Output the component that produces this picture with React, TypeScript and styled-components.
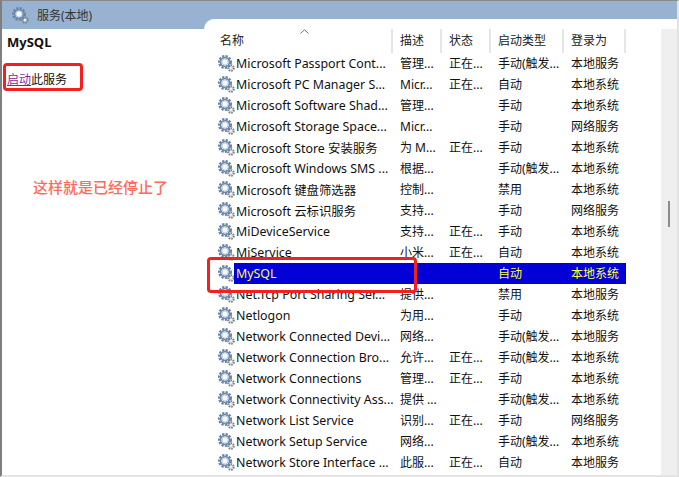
import styled, { createGlobalStyle } from "styled-components";

const GlobalStyle = createGlobalStyle`
  html, body {
    margin: 0;
    padding: 0;
    background: #fff;
  }
  body {
    font-family: "Noto Sans", "Noto Sans CJK SC", sans-serif;
    font-size: 12px;
    color: #111;
  }
`;

type Service = {
  name: string;
  desc: string;
  status: string;
  start: string;
  logon: string;
};

const services: Service[] = [
  { name: "Microsoft Passport Cont...", desc: "管理...", status: "正在...", start: "手动(触发...", logon: "本地服务" },
  { name: "Microsoft PC Manager S...", desc: "Micr...", status: "正在...", start: "自动", logon: "本地系统" },
  { name: "Microsoft Software Shad...", desc: "管理...", status: "", start: "手动", logon: "本地系统" },
  { name: "Microsoft Storage Space...", desc: "Micr...", status: "", start: "手动", logon: "网络服务" },
  { name: "Microsoft Store 安装服务", desc: "为 M...", status: "正在...", start: "手动", logon: "本地系统" },
  { name: "Microsoft Windows SMS ...", desc: "根据...", status: "", start: "手动(触发...", logon: "本地系统" },
  { name: "Microsoft 键盘筛选器", desc: "控制...", status: "", start: "禁用", logon: "本地系统" },
  { name: "Microsoft 云标识服务", desc: "支持...", status: "", start: "手动", logon: "网络服务" },
  { name: "MiDeviceService", desc: "支持...", status: "正在...", start: "手动", logon: "本地系统" },
  { name: "MiService", desc: "小米...", status: "正在...", start: "自动", logon: "本地系统" },
  { name: "MySQL", desc: "", status: "", start: "自动", logon: "本地系统" },
  { name: "Net.Tcp Port Sharing Ser...", desc: "提供...", status: "", start: "禁用", logon: "本地服务" },
  { name: "Netlogon", desc: "为用...", status: "", start: "手动", logon: "本地系统" },
  { name: "Network Connected Devi...", desc: "网络...", status: "", start: "手动(触发...", logon: "本地服务" },
  { name: "Network Connection Bro...", desc: "允许...", status: "正在...", start: "手动(触发...", logon: "本地系统" },
  { name: "Network Connections", desc: "管理...", status: "正在...", start: "手动", logon: "本地系统" },
  { name: "Network Connectivity Ass...", desc: "提供 ...", status: "", start: "手动(触发...", logon: "本地系统" },
  { name: "Network List Service", desc: "识别...", status: "正在...", start: "手动", logon: "网络服务" },
  { name: "Network Setup Service", desc: "网络...", status: "", start: "手动(触发...", logon: "本地系统" },
  { name: "Network Store Interface ...", desc: "此服...", status: "正在...", start: "自动", logon: "本地服务" },
];

const COLUMNS = "159px 49px 49px 73px 62px";

const GearIcon = ({ size = 17 }: { size?: number }) => (
  <svg width={size} height={size} viewBox="0 0 17 17" fill="none">
    <circle cx="13" cy="13" r="2.6" stroke="#7c8288" strokeWidth="2.4" strokeDasharray="1.5 0.8" />
    <circle cx="13" cy="13" r="1.5" fill="#eef0f2" />
    <circle cx="7" cy="7" r="5.8" stroke="#6a84a6" strokeWidth="2.4" strokeDasharray="2.2 1.2" />
    <circle cx="7" cy="7" r="4.4" stroke="#6f8aac" strokeWidth="1.8" />
    <circle cx="7" cy="7" r="3.3" fill="#f6f9fc" />
    <circle cx="7" cy="7" r="3" stroke="#b4c6da" strokeWidth="0.8" />
  </svg>
);

const App = () => {
  return (
    <>
      <GlobalStyle />
      <Window>
        <TitleBar>
          <GearIcon />
          <TitleText>服务(本地)</TitleText>
        </TitleBar>
        <Body>
          <SidePane>
            <SideTitle>MySQL</SideTitle>
            <ActionBox>
              <ActionLink>启动</ActionLink>此服务
            </ActionBox>
            <Note>这样就是已经停止了</Note>
          </SidePane>
          <ListPane>
            <ListMain>
              <HeaderRow>
                <SortArrow width="9" height="5" viewBox="0 0 9 5" fill="none">
                  <path d="M0.5 4.5 L4.5 0.8 L8.5 4.5" stroke="#777" />
                </SortArrow>
                <HeaderCell>名称</HeaderCell>
                <HeaderCell>描述</HeaderCell>
                <HeaderCell>状态</HeaderCell>
                <HeaderCell>启动类型</HeaderCell>
                <HeaderCell>登录为</HeaderCell>
              </HeaderRow>
              {services.map((s) => (
                <Row key={s.name}>
                  <RowIcon>
                    <GearIcon />
                  </RowIcon>
                  <Cells $selected={s.name === "MySQL"}>
                    <NameCell>{s.name}</NameCell>
                    <Cell>{s.desc}</Cell>
                    <Cell>{s.status}</Cell>
                    <Cell>{s.start}</Cell>
                    <Cell>{s.logon}</Cell>
                  </Cells>
                </Row>
              ))}
              <Highlight />
            </ListMain>
            <Scrollbar>
              <Thumb />
            </Scrollbar>
          </ListPane>
        </Body>
      </Window>
    </>
  );
};

export default App;

const Window = styled.div`
  width: 679px;
  height: 477px;
  box-sizing: border-box;
  border-top: 1px solid #8a8a8a;
  border-left: 2px solid #7f7f7f;
  border-right: 2px solid #e2e2e2;
  border-bottom: 2px solid #e4e4e4;
  display: flex;
  flex-direction: column;
  overflow: hidden;
`;

const TitleBar = styled.div`
  height: 28px;
  flex: none;
  background: #98b3d1;
  display: flex;
  align-items: center;
  gap: 8px;
  padding: 0 0 0 10px;
  box-sizing: border-box;
`;

const TitleText = styled.span`
  font-size: 12px;
  color: #333;
  margin-top: -1px;
`;

const Body = styled.div`
  flex: 1;
  display: flex;
  min-height: 0;
`;

const SidePane = styled.div`
  width: 202px;
  flex: none;
  padding: 4px 0 0 5px;
  box-sizing: border-box;
`;

const SideTitle = styled.div`
  font-size: 13px;
  font-weight: 700;
  line-height: 18px;
  color: #111;
`;

const ActionBox = styled.div`
  width: 80px;
  height: 28px;
  box-sizing: border-box;
  margin: 12px 0 0 -4px;
  padding: 3px 0 0 1px;
  border: 3px solid #f2201f;
  border-radius: 4px;
  display: flex;
  align-items: center;
  font-size: 12px;
  color: #111;
`;

const ActionLink = styled.span`
  color: #8e1f9c;
  text-decoration: underline;
`;

const Note = styled.div`
  margin: 86px 0 0 26px;
  font-size: 15px;
  font-weight: 500;
  line-height: 20px;
  color: #ff6a5c;
`;

const ListPane = styled.div`
  flex: 1;
  margin-top: -10px;
  background: #fff;
  border-top-left-radius: 10px;
  display: flex;
  min-width: 0;
`;

const ListMain = styled.div`
  position: relative;
  width: 457px;
  flex: none;
  padding-top: 10px;
  box-sizing: border-box;
`;

const HeaderRow = styled.div`
  position: relative;
  height: 24px;
  display: grid;
  grid-template-columns: ${COLUMNS};
  margin-left: 30px;
  width: 392px;
`;

const SortArrow = styled.svg`
  position: absolute;
  left: 66px;
  top: 0;
`;

const HeaderCell = styled.div`
  display: flex;
  align-items: center;
  padding: 0 0 2px 7px;
  box-sizing: border-box;
  border-right: 2px solid #e5e5e5;
  font-size: 12px;
  color: #222;

  &:first-of-type {
    padding-left: 0;
    margin-left: -14px;
  }
`;

const Row = styled.div`
  height: 21px;
  display: flex;
  align-items: center;
  padding-left: 14px;
`;

const RowIcon = styled.div`
  width: 16px;
  height: 17px;
  flex: none;
`;

const Cells = styled.div<{ $selected?: boolean }>`
  display: grid;
  grid-template-columns: ${COLUMNS};
  width: 392px;
  height: 21px;
  align-items: center;
  background: ${(p) => (p.$selected ? "#0000d7" : "transparent")};
  color: ${(p) => (p.$selected ? "#ffff3c" : "#111")};
`;

const Cell = styled.div`
  padding: 0 0 1px 7px;
  white-space: nowrap;
  overflow: hidden;
  font-size: 12px;
`;

const NameCell = styled(Cell)`
  padding: 0 0 0 2px;
  font-size: 12.4px;
`;

const Highlight = styled.div`
  position: absolute;
  left: 3px;
  top: 238px;
  width: 210px;
  height: 36px;
  box-sizing: border-box;
  border: 3px solid #f2201f;
  border-radius: 4px;
`;

const Scrollbar = styled.div`
  width: 16px;
  flex: none;
  margin-top: 10px;
  margin-left: auto;
  background: #efefef;
  position: relative;
`;

const Thumb = styled.div`
  position: absolute;
  left: 7px;
  top: 172px;
  width: 2px;
  height: 26px;
  background: #8c8c8c;
`;
